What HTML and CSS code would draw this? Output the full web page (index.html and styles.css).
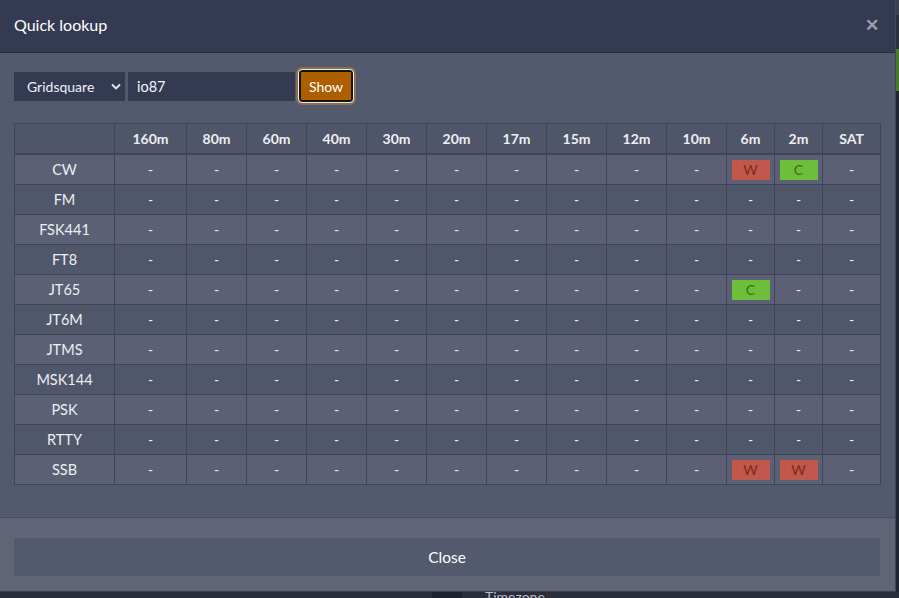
FILE: index.html
```html
<!DOCTYPE html>
<html>
<head>
<meta charset="utf-8">
<link rel="stylesheet" href="styles.css">
</head>
<body>
<div class="page">
  <div class="top">
    <div class="modal">
      <div class="modal-header">
        <div class="title">Quick lookup</div>
        <div class="close-x">&#x2715;</div>
      </div>
      <div class="modal-body">
        <div class="form">
          <div class="select">Gridsquare
            <svg class="chev" width="10" height="7" viewBox="0 0 10 7"><path d="M1 1.5 L5 5.5 L9 1.5" fill="none" stroke="#e6e8ee" stroke-width="1.8"/></svg>
          </div>
          <div class="input">io87</div>
          <button class="show">Show</button>
        </div>
        <table class="grid">
          <colgroup>
            <col style="width:100px"><col style="width:72px">
            <col style="width:60px"><col style="width:60px"><col style="width:60px"><col style="width:60px"><col style="width:60px"><col style="width:60px"><col style="width:60px"><col style="width:60px"><col style="width:60px">
            <col style="width:48px"><col style="width:48px"><col style="width:58px">
          </colgroup>
          <thead>
            <tr><th></th><th>160m</th><th>80m</th><th>60m</th><th>40m</th><th>30m</th><th>20m</th><th>17m</th><th>15m</th><th>12m</th><th>10m</th><th>6m</th><th>2m</th><th>SAT</th></tr>
          </thead>
          <tbody>
            <tr><td>CW</td><td>-</td><td>-</td><td>-</td><td>-</td><td>-</td><td>-</td><td>-</td><td>-</td><td>-</td><td>-</td><td><span class="badge w">W</span></td><td><span class="badge c">C</span></td><td>-</td></tr>
            <tr><td>FM</td><td>-</td><td>-</td><td>-</td><td>-</td><td>-</td><td>-</td><td>-</td><td>-</td><td>-</td><td>-</td><td>-</td><td>-</td><td>-</td></tr>
            <tr><td>FSK441</td><td>-</td><td>-</td><td>-</td><td>-</td><td>-</td><td>-</td><td>-</td><td>-</td><td>-</td><td>-</td><td>-</td><td>-</td><td>-</td></tr>
            <tr><td>FT8</td><td>-</td><td>-</td><td>-</td><td>-</td><td>-</td><td>-</td><td>-</td><td>-</td><td>-</td><td>-</td><td>-</td><td>-</td><td>-</td></tr>
            <tr><td>JT65</td><td>-</td><td>-</td><td>-</td><td>-</td><td>-</td><td>-</td><td>-</td><td>-</td><td>-</td><td>-</td><td><span class="badge c">C</span></td><td>-</td><td>-</td></tr>
            <tr><td>JT6M</td><td>-</td><td>-</td><td>-</td><td>-</td><td>-</td><td>-</td><td>-</td><td>-</td><td>-</td><td>-</td><td>-</td><td>-</td><td>-</td></tr>
            <tr><td>JTMS</td><td>-</td><td>-</td><td>-</td><td>-</td><td>-</td><td>-</td><td>-</td><td>-</td><td>-</td><td>-</td><td>-</td><td>-</td><td>-</td></tr>
            <tr><td>MSK144</td><td>-</td><td>-</td><td>-</td><td>-</td><td>-</td><td>-</td><td>-</td><td>-</td><td>-</td><td>-</td><td>-</td><td>-</td><td>-</td></tr>
            <tr><td>PSK</td><td>-</td><td>-</td><td>-</td><td>-</td><td>-</td><td>-</td><td>-</td><td>-</td><td>-</td><td>-</td><td>-</td><td>-</td><td>-</td></tr>
            <tr><td>RTTY</td><td>-</td><td>-</td><td>-</td><td>-</td><td>-</td><td>-</td><td>-</td><td>-</td><td>-</td><td>-</td><td>-</td><td>-</td><td>-</td></tr>
            <tr><td>SSB</td><td>-</td><td>-</td><td>-</td><td>-</td><td>-</td><td>-</td><td>-</td><td>-</td><td>-</td><td>-</td><td><span class="badge w">W</span></td><td><span class="badge w">W</span></td><td>-</td></tr>
          </tbody>
        </table>
      </div>
      <div class="modal-footer">
        <button class="close-btn">Close</button>
      </div>
    </div>
    <div class="gutter">
      <div class="g1"></div><div class="g2"></div><div class="g3"></div><div class="g4"></div>
    </div>
  </div>
  <div class="bottom">
    <div class="blk"></div>
    <div class="tz">Timezone</div>
  </div>
</div>
</body>
</html>
```
FILE: styles.css
```css
html, body {
  margin: 0;
  padding: 0;
}
body {
  background: #252836;
  font-family: Lato, "Open Sans", sans-serif;
  color: #eef0f4;
  width: 899px;
  height: 598px;
  overflow: hidden;
}
.page {
  display: flex;
  flex-direction: column;
  height: 598px;
  overflow: hidden;
}
.top {
  display: flex;
}
.modal {
  width: 895px;
  height: 591px;
  flex: none;
  display: flex;
  flex-direction: column;
  border-bottom: 1px solid #3b3f50;
  border-right: 1px solid #40455a;
  box-sizing: content-box;
}
.modal-header {
  height: 52px;
  background: #343a52;
  border-bottom: 1px solid #282c3c;
  display: flex;
  align-items: center;
  justify-content: space-between;
  padding: 0 16px 0 14px;
  flex: none;
}
.title {
  font-size: 16px;
  color: #ffffff;
  margin-top: -4px;
}
.close-x {
  font-size: 17px;
  font-weight: 900;
  color: #9a9eac;
  margin-top: -3px;
}
.modal-body {
  background: #545a6d;
  flex: none;
  height: 464px;
  padding: 18px 15px 0 14px;
  box-sizing: border-box;
}
.form {
  display: flex;
  align-items: center;
  height: 30px;
  gap: 3px;
}
.select {
  width: 111px;
  height: 29px;
  box-sizing: border-box;
  background: #343a52;
  font-size: 14px;
  padding-left: 13px;
  display: flex;
  align-items: center;
  justify-content: space-between;
  padding-right: 4px;
  color: #eef0f4;
}
.input {
  width: 167px;
  height: 29px;
  box-sizing: border-box;
  background: #343a52;
  font-size: 14.5px;
  padding-left: 9px;
  display: flex;
  align-items: center;
  color: #f4f5f8;
}
.show {
  margin-left: 1px;
  width: 54px;
  height: 32px;
  box-sizing: border-box;
  background: #ad5f00;
  border: 2px solid #141414;
  border-radius: 3px;
  outline: 1px solid #ececec;
  box-shadow: 0 0 0 3px #8d6e4c;
  color: #ffffff;
  font-family: Lato, "Open Sans", sans-serif;
  font-size: 14px;
  padding: 0;
}
.grid {
  margin-top: 22px;
  border-collapse: collapse;
  table-layout: fixed;
  width: 866px;
  font-size: 14px;
}
.grid th, .grid td {
  border: 1px solid #3f4456;
  text-align: center;
  padding: 0;
  height: 29px;
}
.grid th {
  background: #50566a;
  font-weight: 700;
  color: #eceef2;
  border-bottom: 2px solid #3f4456;
}
.grid td {
  color: #eceef2;
}
.grid tbody tr:nth-child(odd) td {
  background: #5b6074;
}
.grid tbody tr:nth-child(even) td {
  background: #51576b;
}
.grid td:first-child {
  font-size: 14.5px;
}
.badge {
  display: inline-block;
  width: 38px;
  height: 20px;
  line-height: 20px;
  font-size: 14px;
  vertical-align: middle;
}
.badge.w {
  background: #c1584b;
  color: #7b2a22;
}
.badge.c {
  background: #6dbf3b;
  color: #3b6a22;
}
.modal-footer {
  flex: 1;
  background: #5f6477;
  border-top: 1px solid #484d5f;
  padding: 20px 15px 0 14px;
}
.close-btn {
  width: 866px;
  height: 38px;
  background: #545a6d;
  border: none;
  color: #ffffff;
  font-family: Lato, "Open Sans", sans-serif;
  font-size: 15.5px;
  padding: 0;
}
.gutter {
  flex: 1;
  display: flex;
  flex-direction: column;
}
.g1 { height: 15px; background: #3c4152; }
.g2 { height: 34px; background: #2b2f3e; }
.g3 { height: 42px; background: #4b7a2a; }
.g4 { flex: 1; background: #222534; }
.bottom {
  flex: 1;
  display: flex;
  position: relative;
  background: #2a2d3a;
}
.blk {
  margin-left: 432px;
  width: 30px;
  background: #1e2130;
}
.tz {
  margin-left: 23px;
  margin-top: -4px;
  font-size: 14px;
  color: #b9bcc6;
}
```
